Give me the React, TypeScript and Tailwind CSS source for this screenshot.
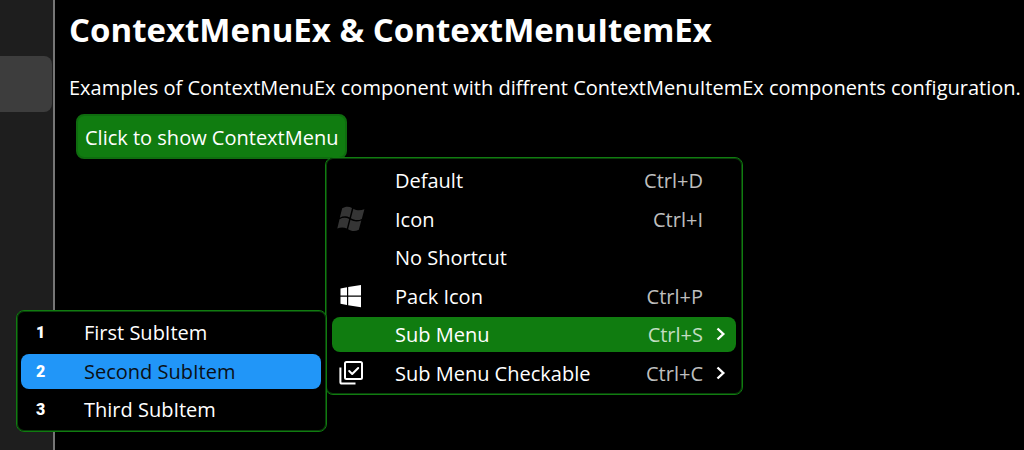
import React from "react";

type MenuItem = {
  label: string;
  shortcut?: string;
  icon?: React.ReactNode;
  selected?: boolean;
  submenu?: boolean;
  children?: React.ReactNode;
};

function FlagIcon() {
  return (
    <svg viewBox="0 0 28 28" className="size-7 fill-[#353535]" aria-hidden="true">
      <path d="M5.2 2.3C8.2.2 11.8.1 15 1.9L12.6 11.4C9.4 9.9 6 10 2.8 11.8Z" />
      <path d="M16.4 2.8C19.8 4.8 23.6 4.8 27.4 3.2L24.8 12.9C21.3 14.7 17.6 14.5 13.9 12.3Z" />
      <path d="M2.5 13.2C5.8 11.4 9.2 11.4 12.2 12.9L9.8 22.5C6.8 21 3.4 21 .3 22.6Z" />
      <path d="M13.5 13.8C17.1 15.9 20.7 16 24.3 14.4L21.8 23.7C18.2 25.7 14.6 25.6 11.1 23.3Z" />
    </svg>
  );
}

function WindowsIcon() {
  return (
    <svg viewBox="0 0 28 28" className="size-7 fill-white" aria-hidden="true">
      <path d="M3.5 5.5 10 4.3V12.5H3.5ZM11.2 4.1 24 2.1V12.5H11.2ZM3.5 13.7H10V22L3.5 20.8ZM11.2 13.7H24V24.2L11.2 22.2Z" />
    </svg>
  );
}

function CheckListIcon() {
  return (
    <svg
      viewBox="0 0 28 28"
      className="size-7 fill-none stroke-white stroke-2"
      strokeLinecap="round"
      strokeLinejoin="round"
      aria-hidden="true"
    >
      <rect x="8" y="2" width="17" height="17" rx="1.5" />
      <path d="M3.4 7.5V22Q3.4 23.6 5 23.6H18.5" strokeLinecap="butt" />
      <path d="m12.2 11 3 3 6-6" />
    </svg>
  );
}

function Chevron() {
  return (
    <svg
      viewBox="0 0 10 16"
      className="h-4 w-[10px] fill-none stroke-white stroke-[2.4]"
      aria-hidden="true"
    >
      <path d="m1.5 1.5 5.8 5.5-5.8 5.5" />
    </svg>
  );
}

const digit = (n: number) => (
  <span className="block font-['Roboto',sans-serif] text-base leading-4 font-black">{n}</span>
);

function Row({ label, shortcut, icon, selected, submenu, children }: MenuItem) {
  return (
    <li role="none" className="relative odd:mb-px">
      <button
        type="button"
        role="menuitem"
        aria-haspopup={submenu ? "menu" : undefined}
        className={`flex h-[35px] w-full items-center rounded-lg pr-[10px] text-left ${selected ? "bg-[#107c10]" : ""}`}
      >
        <span className="flex w-[63px] shrink-0 items-center pl-[5px]">{icon}</span>
        <span className="flex-1">{label}</span>
        {shortcut && <span className="text-white/75">{shortcut}</span>}
        <span className="flex w-[23px] justify-end">{submenu && <Chevron />}</span>
      </button>
      {children}
    </li>
  );
}

function SubRow({ label, icon, selected }: MenuItem) {
  return (
    <li role="none" className="odd:mb-px">
      <button
        type="button"
        role="menuitem"
        className={`flex h-[35px] w-full items-center rounded-lg text-left ${selected ? "bg-[#2196f8]" : ""}`}
      >
        <span className="w-[63px] shrink-0 pl-[15px]">{icon}</span>
        <span className={selected ? "text-[#0a1016]" : ""}>{label}</span>
      </button>
    </li>
  );
}

export default function App() {
  return (
    <div className="flex min-h-screen overflow-hidden bg-black font-['Open_Sans','Noto_Sans',sans-serif] text-xl text-white">
      <nav className="w-[55px] shrink-0 border-r-2 border-[#767676] bg-[#1e1e1e] pt-14 pr-px">
        <button
          type="button"
          aria-label="Context menu page"
          className="block h-14 w-full rounded-r-lg bg-[#3d3d3d]"
        />
      </nav>
      <main className="min-w-0 flex-1 pl-[14px]">
        <h1 className="pt-2 text-[33px] leading-[44px] font-bold whitespace-nowrap">
          ContextMenuEx &amp; ContextMenuItemEx
        </h1>
        <p className="mt-[22px] leading-7 whitespace-nowrap">
          Examples of ContextMenuEx component with diffrent ContextMenuItemEx components configuration.
        </p>
        <div className="relative mt-3 ml-[7px] w-fit">
          <button
            type="button"
            className="block rounded-lg border-2 border-[#0f6c0f] bg-[#107c10] px-[7px] pt-[6px] pb-[3px] leading-8 whitespace-nowrap"
          >
            Click to show ContextMenu
          </button>
          <ul
            role="menu"
            className="absolute top-[43px] left-[249px] flex w-[418px] flex-col gap-[3px] rounded-lg border border-[#107c10] bg-black px-[6px] pt-[5px] pb-[3px] inset-shadow-[0_0_0_1px_#0a3f0a]"
          >
            <Row label="Default" shortcut="Ctrl+D" />
            <Row label="Icon" shortcut="Ctrl+I" icon={<FlagIcon />} />
            <Row label="No Shortcut" />
            <Row label="Pack Icon" shortcut="Ctrl+P" icon={<WindowsIcon />} />
            <Row label="Sub Menu" shortcut="Ctrl+S" selected submenu>
              <ul
                role="menu"
                className="absolute -top-[7px] right-full mr-[5px] flex w-[311px] flex-col gap-[3px] rounded-lg border border-[#107c10] bg-black pt-[4px] pr-[5px] pb-[3px] pl-1 inset-shadow-[0_0_0_1px_#0a3f0a]"
              >
                <SubRow label="First SubItem" icon={digit(1)} />
                <SubRow label="Second SubItem" icon={digit(2)} selected />
                <SubRow label="Third SubItem" icon={digit(3)} />
              </ul>
            </Row>
            <Row label="Sub Menu Checkable" shortcut="Ctrl+C" icon={<CheckListIcon />} submenu />
          </ul>
        </div>
      </main>
    </div>
  );
}
